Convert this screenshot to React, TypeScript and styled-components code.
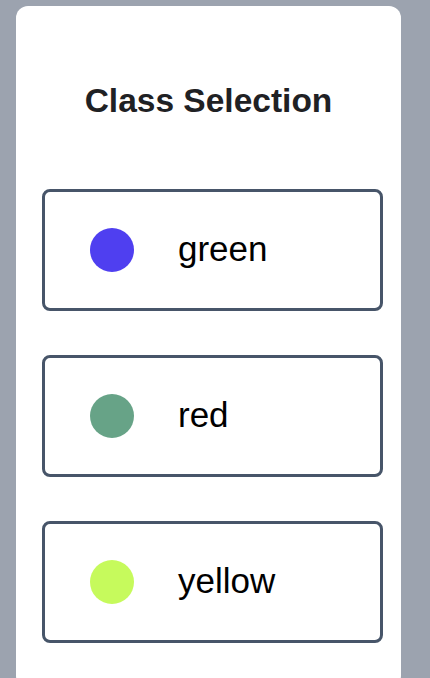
import React from "react";
import styled, { createGlobalStyle } from "styled-components";

const GlobalStyle = createGlobalStyle`
  html, body {
    margin: 0;
    padding: 0;
    background: #9ca3af;
    font-family: "Liberation Sans", Arial, sans-serif;
  }
  body {
    overflow: hidden;
  }
`;

const Page = styled.div`
  padding: 6px 29px 0 16px;
  min-height: 678px;
  box-sizing: border-box;
`;

const Card = styled.div`
  background: #ffffff;
  border-radius: 12px;
  width: 385px;
  box-sizing: border-box;
  padding: 75px 18px 45px 26px;
  display: flex;
  flex-direction: column;
`;

const Title = styled.h1`
  margin: 0 0 68px 0;
  font-size: 33.5px;
  line-height: 40px;
  font-weight: 700;
  color: #1f2124;
  text-align: center;
  padding-right: 8px;
`;

const List = styled.div`
  display: flex;
  flex-direction: column;
  gap: 44px;
`;

const Option = styled.div`
  height: 122px;
  box-sizing: border-box;
  border: 3px solid #475569;
  border-radius: 8px;
  display: flex;
  align-items: center;
  padding-left: 45px;
  gap: 44px;
`;

const Dot = styled.span<{ $color: string }>`
  width: 44px;
  height: 44px;
  border-radius: 50%;
  background: ${(p) => p.$color};
  flex-shrink: 0;
`;

const Label = styled.span`
  font-size: 35px;
  color: #000000;
  line-height: 40px;
  margin-top: -3px;
`;

const classes = [
  { name: "green", color: "#4f3ff0" },
  { name: "red", color: "#67a387" },
  { name: "yellow", color: "#c6fa5c" },
];

export default function App() {
  return (
    <>
      <GlobalStyle />
      <Page>
        <Card>
          <Title>Class Selection</Title>
          <List>
            {classes.map((c) => (
              <Option key={c.name}>
                <Dot $color={c.color} />
                <Label>{c.name}</Label>
              </Option>
            ))}
          </List>
        </Card>
      </Page>
    </>
  );
}
